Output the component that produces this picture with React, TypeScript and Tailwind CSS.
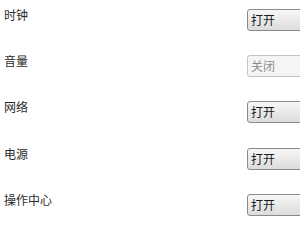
const rows = [
  { label: '时钟', value: '打开', on: true, h: 'h-[46px]' },
  { label: '音量', value: '关闭', on: false, h: 'h-[46px]' },
  { label: '网络', value: '打开', on: true, h: 'h-[47px]' },
  { label: '电源', value: '打开', on: true, h: 'h-[46px]' },
  { label: '操作中心', value: '打开', on: true, h: 'h-[49px]' },
];

function Select({ value, on }: { value: string; on: boolean }) {
  return (
    <div
      className={
        on
          ? 'mt-[9px] h-[22px] w-[80px] shrink-0 rounded-[3px] border border-[#8a8a8a] bg-gradient-to-b from-[#f7f7f7] to-[#dcdcdc] pl-[3px] text-[12px] leading-[20px] text-[#1a1a1a]'
          : 'mt-[9px] h-[22px] w-[80px] shrink-0 rounded-[3px] border border-[#c4c4c4] bg-[#f5f5f5] pl-[3px] text-[12px] leading-[20px] text-[#8c8c8c]'
      }
    >
      {value}
    </div>
  );
}

export default function App() {
  return (
    <div
      className="h-[234px] w-[300px] overflow-hidden bg-white"
      style={{ fontFamily: '"Noto Sans CJK SC", "Noto Sans", sans-serif' }}
    >
      {rows.map((r) => (
        <div key={r.label} className={`flex items-start ${r.h}`}>
          <div className="mt-[6px] w-[247px] shrink-0 pl-[4px] text-[12px] leading-[17px] text-[#2b2b2b]">
            {r.label}
          </div>
          <Select value={r.value} on={r.on} />
        </div>
      ))}
    </div>
  );
}
